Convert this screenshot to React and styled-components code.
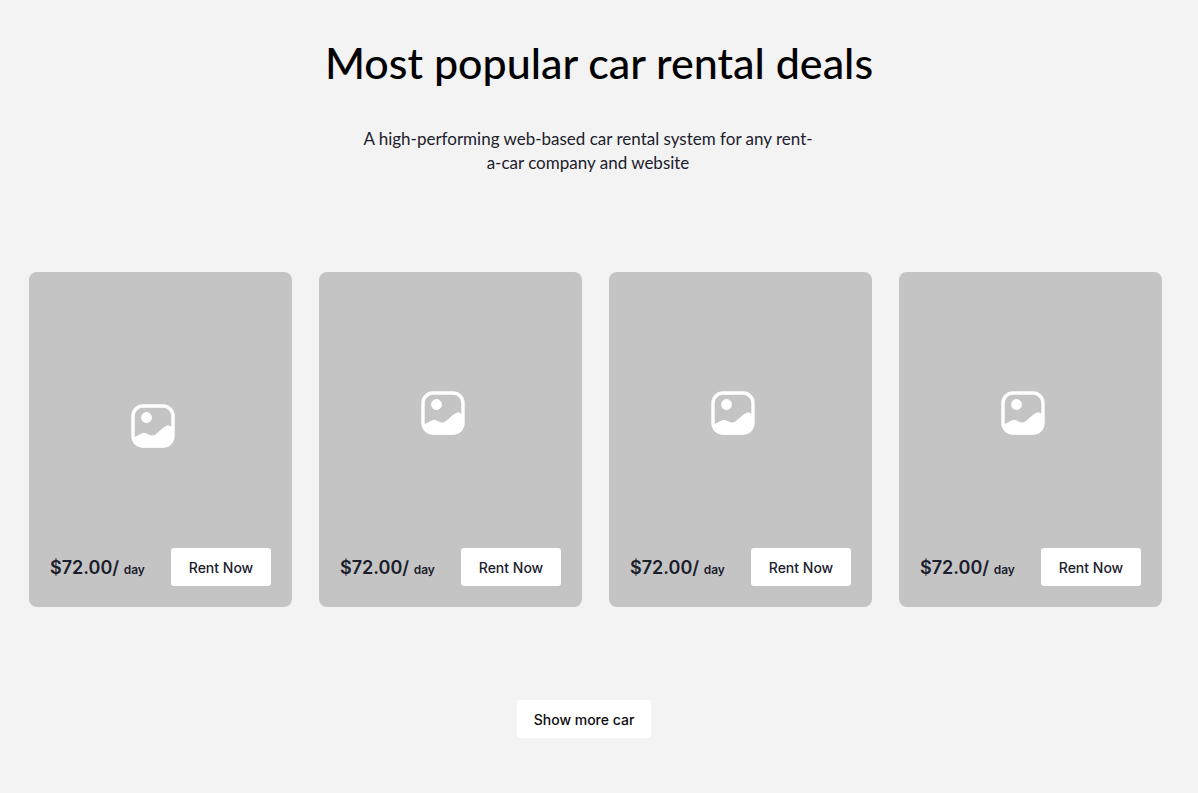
import React from "react";
import styled, { createGlobalStyle } from "styled-components";

const GlobalStyle = createGlobalStyle`
  *, *::before, *::after { box-sizing: border-box; }
  body {
    margin: 0;
    background: #f3f3f3;
    color: #1b202c;
    font-family: Inter, "Liberation Sans", sans-serif;
  }
`;

const displayFont = 'Lato, "Liberation Sans", sans-serif';

const Page = styled.main`
  padding: 36px 0 55px;
`;

const Title = styled.h1`
  margin: 0;
  padding: 0 24px;
  color: #000;
  font-family: ${displayFont};
  font-size: 43px;
  font-weight: 500;
  line-height: 54px;
  text-align: center;
`;

const Intro = styled.div`
  display: flex;
  justify-content: center;
  margin-top: 37px;
  padding-right: 22px;
`;

const Lead = styled.p`
  max-width: 456px;
  margin: 0;
  font-family: ${displayFont};
  font-size: 17px;
  line-height: 24px;
  text-align: center;
`;

const DealGrid = styled.ul`
  display: grid;
  grid-template-columns: repeat(auto-fit, minmax(250px, 1fr));
  gap: 27px;
  margin: 97px 0 0;
  padding: 0 36px 0 29px;
  list-style: none;
`;

const Card = styled.li`
  display: flex;
  flex-direction: column;
  min-height: 335px;
  padding: 0 21px 21px;
  border-radius: 8px;
  background: #c4c4c4;
`;

const Media = styled.div`
  display: flex;
  flex: 1;
  align-items: center;
  justify-content: center;
  padding: ${({ $lowered }) => ($lowered ? "32px" : "6px")} 15px 0 0;
`;

const CardFooter = styled.div`
  display: flex;
  align-items: center;
  justify-content: space-between;
`;

const Price = styled.p`
  margin: 0;
  padding-top: 4px;
  font-size: 18px;
  font-weight: 600;
  line-height: 24px;
  white-space: nowrap;
`;

const Period = styled.span`
  font-size: 12px;
`;

const Button = styled.button`
  height: 38px;
  padding: 2px 17px 0;
  min-width: 100px;
  border: 0;
  border-radius: 3px;
  background: #fff;
  color: ${({ $strong }) => ($strong ? "#0c0c0e" : "#1b202c")};
  font-family: inherit;
  font-size: 14px;
  font-weight: 500;
  line-height: 20px;
  white-space: nowrap;
  cursor: pointer;
`;

const More = styled.div`
  display: flex;
  justify-content: center;
  margin-top: 93px;
  padding-right: 30px;
`;

function PictureIcon() {
  return (
    <svg width="44" height="44" viewBox="0 0 44 44" fill="none" aria-hidden="true">
      <rect x="2" y="2" width="40" height="40" rx="10" stroke="#fff" strokeWidth="3.4" />
      <circle cx="15.5" cy="13.5" r="5.4" fill="#fff" />
      <path
        d="M1 34 C5 32.8 8 30.6 11.5 29.3 C14 28.6 15.5 29.3 17.5 30.6 C20 32 22.5 31.9 25 30 C29 26.8 32 23.2 35.5 21.8 C38.5 21 40.5 22.4 43 25 V32 C43 39 39 43.5 32 43.5 H12 C6 43.5 2 40 1 34 Z"
        fill="#fff"
      />
    </svg>
  );
}

const deals = [
  { id: 1, price: "$72.00/", lowered: true },
  { id: 2, price: "$72.00/" },
  { id: 3, price: "$72.00/" },
  { id: 4, price: "$72.00/" },
];

export default function App() {
  return (
    <>
      <GlobalStyle />
      <Page>
        <Title>Most popular car rental deals</Title>
        <Intro>
          <Lead>
            A high-performing web-based car rental system for any rent-a-car company and website
          </Lead>
        </Intro>
        <DealGrid>
          {deals.map((deal) => (
            <Card key={deal.id}>
              <Media $lowered={deal.lowered}>
                <PictureIcon />
              </Media>
              <CardFooter>
                <Price>
                  {deal.price} <Period>day</Period>
                </Price>
                <Button type="button">Rent Now</Button>
              </CardFooter>
            </Card>
          ))}
        </DealGrid>
        <More>
          <Button type="button" $strong>Show more car</Button>
        </More>
      </Page>
    </>
  );
}
